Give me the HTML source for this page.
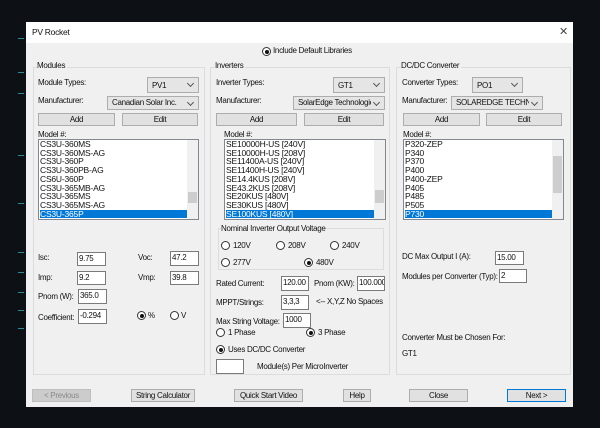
<!DOCTYPE html>
<html><head><meta charset="utf-8"><style>
*{margin:0;padding:0;box-sizing:border-box}
body{width:600px;height:428px;background:#0d1015;position:relative;overflow:hidden;font-family:"Liberation Sans",Arial,sans-serif;font-size:8px;letter-spacing:-0.3px;color:#111}
.a{position:absolute;white-space:nowrap}
#win{position:absolute;left:26px;top:22px;width:547px;height:385px;background:#f0f0f0}
#title{position:absolute;left:26px;top:22px;width:547px;height:21px;background:#fff}
.grp{position:absolute;border:1px solid #dcdcdc}
.cb{position:absolute;background:#e5e5e5;border:1px solid #adadad;padding-left:4px;line-height:12px;white-space:nowrap}
.cb span{display:block;overflow:hidden;margin-right:13px}
.cb:after{content:"";position:absolute;right:5px;top:3px;width:4px;height:4px;border-right:1px solid #555;border-bottom:1px solid #555;transform:rotate(45deg)}
.btn{position:absolute;background:#e1e1e1;border:1px solid #adadad;text-align:center;line-height:11px;white-space:nowrap}
.lb{position:absolute;background:#fff;border:1px solid #828790;overflow:hidden;font-size:8.5px;line-height:8.7px;padding-left:1px;letter-spacing:-0.2px}
.lb .sel{background:#0078d7;color:#fff;margin-right:11px}
.sb{position:absolute;right:0;top:0;bottom:0;width:11px;background:#f0f0f0}
.tb{position:absolute;background:#fff;border:1px solid #7a7a7a;padding-left:1px;line-height:12px;white-space:nowrap;overflow:hidden}
.rd{position:absolute;width:9px;height:9px;border:1px solid #333;border-radius:50%;background:#fff}
.rd.on:after{content:"";position:absolute;left:1.5px;top:1.5px;width:4px;height:4px;border-radius:50%;background:#111}
.dash{position:absolute;left:18px;width:6px;height:1px;background:#2a8a9a}
</style></head><body>
<div class="dash" style="top:38px"></div><div class="dash" style="top:72px"></div><div class="dash" style="top:93px"></div><div class="dash" style="top:155px"></div><div class="dash" style="top:203px"></div><div class="dash" style="top:252px"></div><div class="dash" style="top:272px"></div><div class="dash" style="top:292px"></div><div class="dash" style="top:310px"></div><div class="dash" style="top:328px"></div>
<div id="win"></div><div id="title"></div>
<div class="a" style="left:32px;top:27px;font-size:8.5px">PV Rocket</div>
<div class="a" style="left:559px;top:25px;font-size:11px;color:#444">✕</div>
<div class="rd on" style="left:262px;top:47px"></div><div class="a" style="left:273px;top:46px">Include Default Libraries</div>

<div class="grp" style="left:33px;top:67px;width:172px;height:308px"></div>
<div class="grp" style="left:210px;top:67px;width:180px;height:308px"></div>
<div class="grp" style="left:396px;top:67px;width:175px;height:308px"></div>

<div class="a" style="left:37px;top:61px;background:#f0f0f0;padding-right:2px">Modules</div>
<div class="a" style="left:38px;top:78px">Module Types:</div>
<div class="cb" style="left:147px;top:77px;width:52px;height:16px;line-height:15px"><span>PV1</span></div>
<div class="a" style="left:38px;top:96px">Manufacturer:</div>
<div class="cb" style="left:107px;top:96px;width:92px;height:14px"><span>Canadian Solar Inc.</span></div>
<div class="btn" style="left:38px;top:113px;width:77px;height:13px">Add</div>
<div class="btn" style="left:122px;top:113px;width:76px;height:13px">Edit</div>
<div class="a" style="left:38px;top:130px">Model #:</div>
<div class="lb" style="left:38px;top:139px;width:161px;height:81px"><div>CS3U-360MS</div><div>CS3U-360MS-AG</div><div>CS3U-360P</div><div>CS3U-360PB-AG</div><div>CS6U-360P</div><div>CS3U-365MB-AG</div><div>CS3U-365MS</div><div>CS3U-365MS-AG</div><div class="sel">CS3U-365P</div><div class="sb"><div style="position:absolute;left:1px;right:1px;top:52px;height:11px;background:#cdcdcd"></div></div></div>
<div class="a" style="left:38px;top:253px">Isc:</div><div class="tb" style="left:77px;top:252px;width:29px;height:14px">9.75</div>
<div class="a" style="left:138px;top:253px">Voc:</div><div class="tb" style="left:170px;top:251px;width:29px;height:15px">47.2</div>
<div class="a" style="left:38px;top:273px">Imp:</div><div class="tb" style="left:77px;top:271px;width:29px;height:14px">9.2</div>
<div class="a" style="left:138px;top:273px">Vmp:</div><div class="tb" style="left:170px;top:271px;width:29px;height:14px">39.8</div>
<div class="a" style="left:38px;top:292px">Pnom (W):</div><div class="tb" style="left:78px;top:289px;width:29px;height:15px">365.0</div>
<div class="a" style="left:38px;top:313px">Coefficient:</div><div class="tb" style="left:78px;top:309px;width:29px;height:15px">-0.294</div>
<div class="rd on" style="left:137px;top:311px"></div><div class="a" style="left:148px;top:311px">%</div>
<div class="rd" style="left:170px;top:311px"></div><div class="a" style="left:181px;top:311px">V</div>

<div class="a" style="left:215px;top:61px;background:#f0f0f0;padding-right:2px">Inverters</div>
<div class="a" style="left:216px;top:78px">Inverter Types:</div>
<div class="cb" style="left:333px;top:77px;width:52px;height:16px;line-height:15px"><span>GT1</span></div>
<div class="a" style="left:216px;top:96px">Manufacturer:</div>
<div class="cb" style="left:293px;top:96px;width:92px;height:14px"><span>SolarEdge Technologies</span></div>
<div class="btn" style="left:216px;top:113px;width:81px;height:13px">Add</div>
<div class="btn" style="left:304px;top:113px;width:80px;height:13px">Edit</div>
<div class="a" style="left:224px;top:130px">Model #:</div>
<div class="lb" style="left:224px;top:139px;width:162px;height:81px"><div>SE10000H-US [240V]</div><div>SE10000H-US [208V]</div><div>SE11400A-US [240V]</div><div>SE11400H-US [240V]</div><div>SE14.4KUS [208V]</div><div>SE43.2KUS [208V]</div><div>SE20KUS [480V]</div><div>SE30KUS [480V]</div><div class="sel">SE100KUS [480V]</div><div class="sb"><div style="position:absolute;left:1px;right:1px;top:50px;height:13px;background:#cdcdcd"></div></div></div>
<div class="grp" style="left:218px;top:228px;width:166px;height:42px"></div>
<div class="a" style="left:221px;top:224px;background:#f0f0f0">Nominal Inverter Output Voltage</div>
<div class="rd" style="left:221px;top:241px"></div><div class="a" style="left:233px;top:241px">120V</div>
<div class="rd" style="left:276px;top:241px"></div><div class="a" style="left:288px;top:241px">208V</div>
<div class="rd" style="left:330px;top:241px"></div><div class="a" style="left:342px;top:241px">240V</div>
<div class="rd" style="left:221px;top:258px"></div><div class="a" style="left:233px;top:258px">277V</div>
<div class="rd on" style="left:304px;top:258px"></div><div class="a" style="left:316px;top:258px">480V</div>
<div class="a" style="left:216px;top:279px">Rated Current:</div><div class="tb" style="left:281px;top:276px;width:28px;height:15px">120.00</div>
<div class="a" style="left:314px;top:279px">Pnom (KW):</div><div class="tb" style="left:357px;top:276px;width:28px;height:15px">100.000</div>
<div class="a" style="left:216px;top:298px">MPPT/Strings:</div><div class="tb" style="left:281px;top:295px;width:28px;height:15px">3,3,3</div>
<div class="a" style="left:316px;top:297px">&lt;-- X,Y,Z No Spaces</div>
<div class="a" style="left:216px;top:317px">Max String Voltage:</div><div class="tb" style="left:283px;top:313px;width:28px;height:15px">1000</div>
<div class="rd" style="left:216px;top:328px"></div><div class="a" style="left:228px;top:328px">1 Phase</div>
<div class="rd on" style="left:306px;top:328px"></div><div class="a" style="left:318px;top:328px">3 Phase</div>
<div class="rd on" style="left:216px;top:345px"></div><div class="a" style="left:228px;top:345px">Uses DC/DC Converter</div>
<div class="tb" style="left:216px;top:359px;width:28px;height:15px"></div>
<div class="a" style="left:257px;top:362px">Module(s) Per MicroInverter</div>

<div class="a" style="left:401px;top:61px;background:#f0f0f0;padding-right:2px">DC/DC Converter</div>
<div class="a" style="left:402px;top:78px">Converter Types:</div>
<div class="cb" style="left:472px;top:77px;width:51px;height:16px;line-height:15px"><span>PO1</span></div>
<div class="a" style="left:402px;top:96px">Manufacturer:</div>
<div class="cb" style="left:451px;top:96px;width:92px;height:14px"><span>SOLAREDGE TECHNO</span></div>
<div class="btn" style="left:403px;top:113px;width:77px;height:13px">Add</div>
<div class="btn" style="left:486px;top:113px;width:76px;height:13px">Edit</div>
<div class="a" style="left:403px;top:130px">Model #:</div>
<div class="lb" style="left:403px;top:139px;width:161px;height:81px"><div>P320-ZEP</div><div>P340</div><div>P370</div><div>P400</div><div>P400-ZEP</div><div>P405</div><div>P485</div><div>P505</div><div class="sel">P730</div><div class="sb"><div style="position:absolute;left:1px;right:1px;top:16px;height:37px;background:#cdcdcd"></div></div></div>
<div class="a" style="left:402px;top:252px">DC Max Output I (A):</div><div class="tb" style="left:495px;top:251px;width:29px;height:14px">15.00</div>
<div class="a" style="left:402px;top:272px">Modules per Converter (Typ):</div><div class="tb" style="left:499px;top:269px;width:28px;height:14px">2</div>
<div class="a" style="left:402px;top:333px">Converter Must be Chosen For:</div>
<div class="a" style="left:402px;top:349px">GT1</div>

<div class="btn" style="left:32px;top:389px;width:59px;height:13px;background:#ccc;border-color:#bfbfbf;color:#8a8a8a">&lt; Previous</div>
<div class="btn" style="left:131px;top:389px;width:64px;height:13px">String Calculator</div>
<div class="btn" style="left:234px;top:389px;width:69px;height:13px">Quick Start Video</div>
<div class="btn" style="left:343px;top:389px;width:28px;height:13px">Help</div>
<div class="btn" style="left:409px;top:389px;width:59px;height:13px">Close</div>
<div class="btn" style="left:507px;top:389px;width:59px;height:13px;border:1px solid #0078d7">Next &gt;</div>
</body></html>
